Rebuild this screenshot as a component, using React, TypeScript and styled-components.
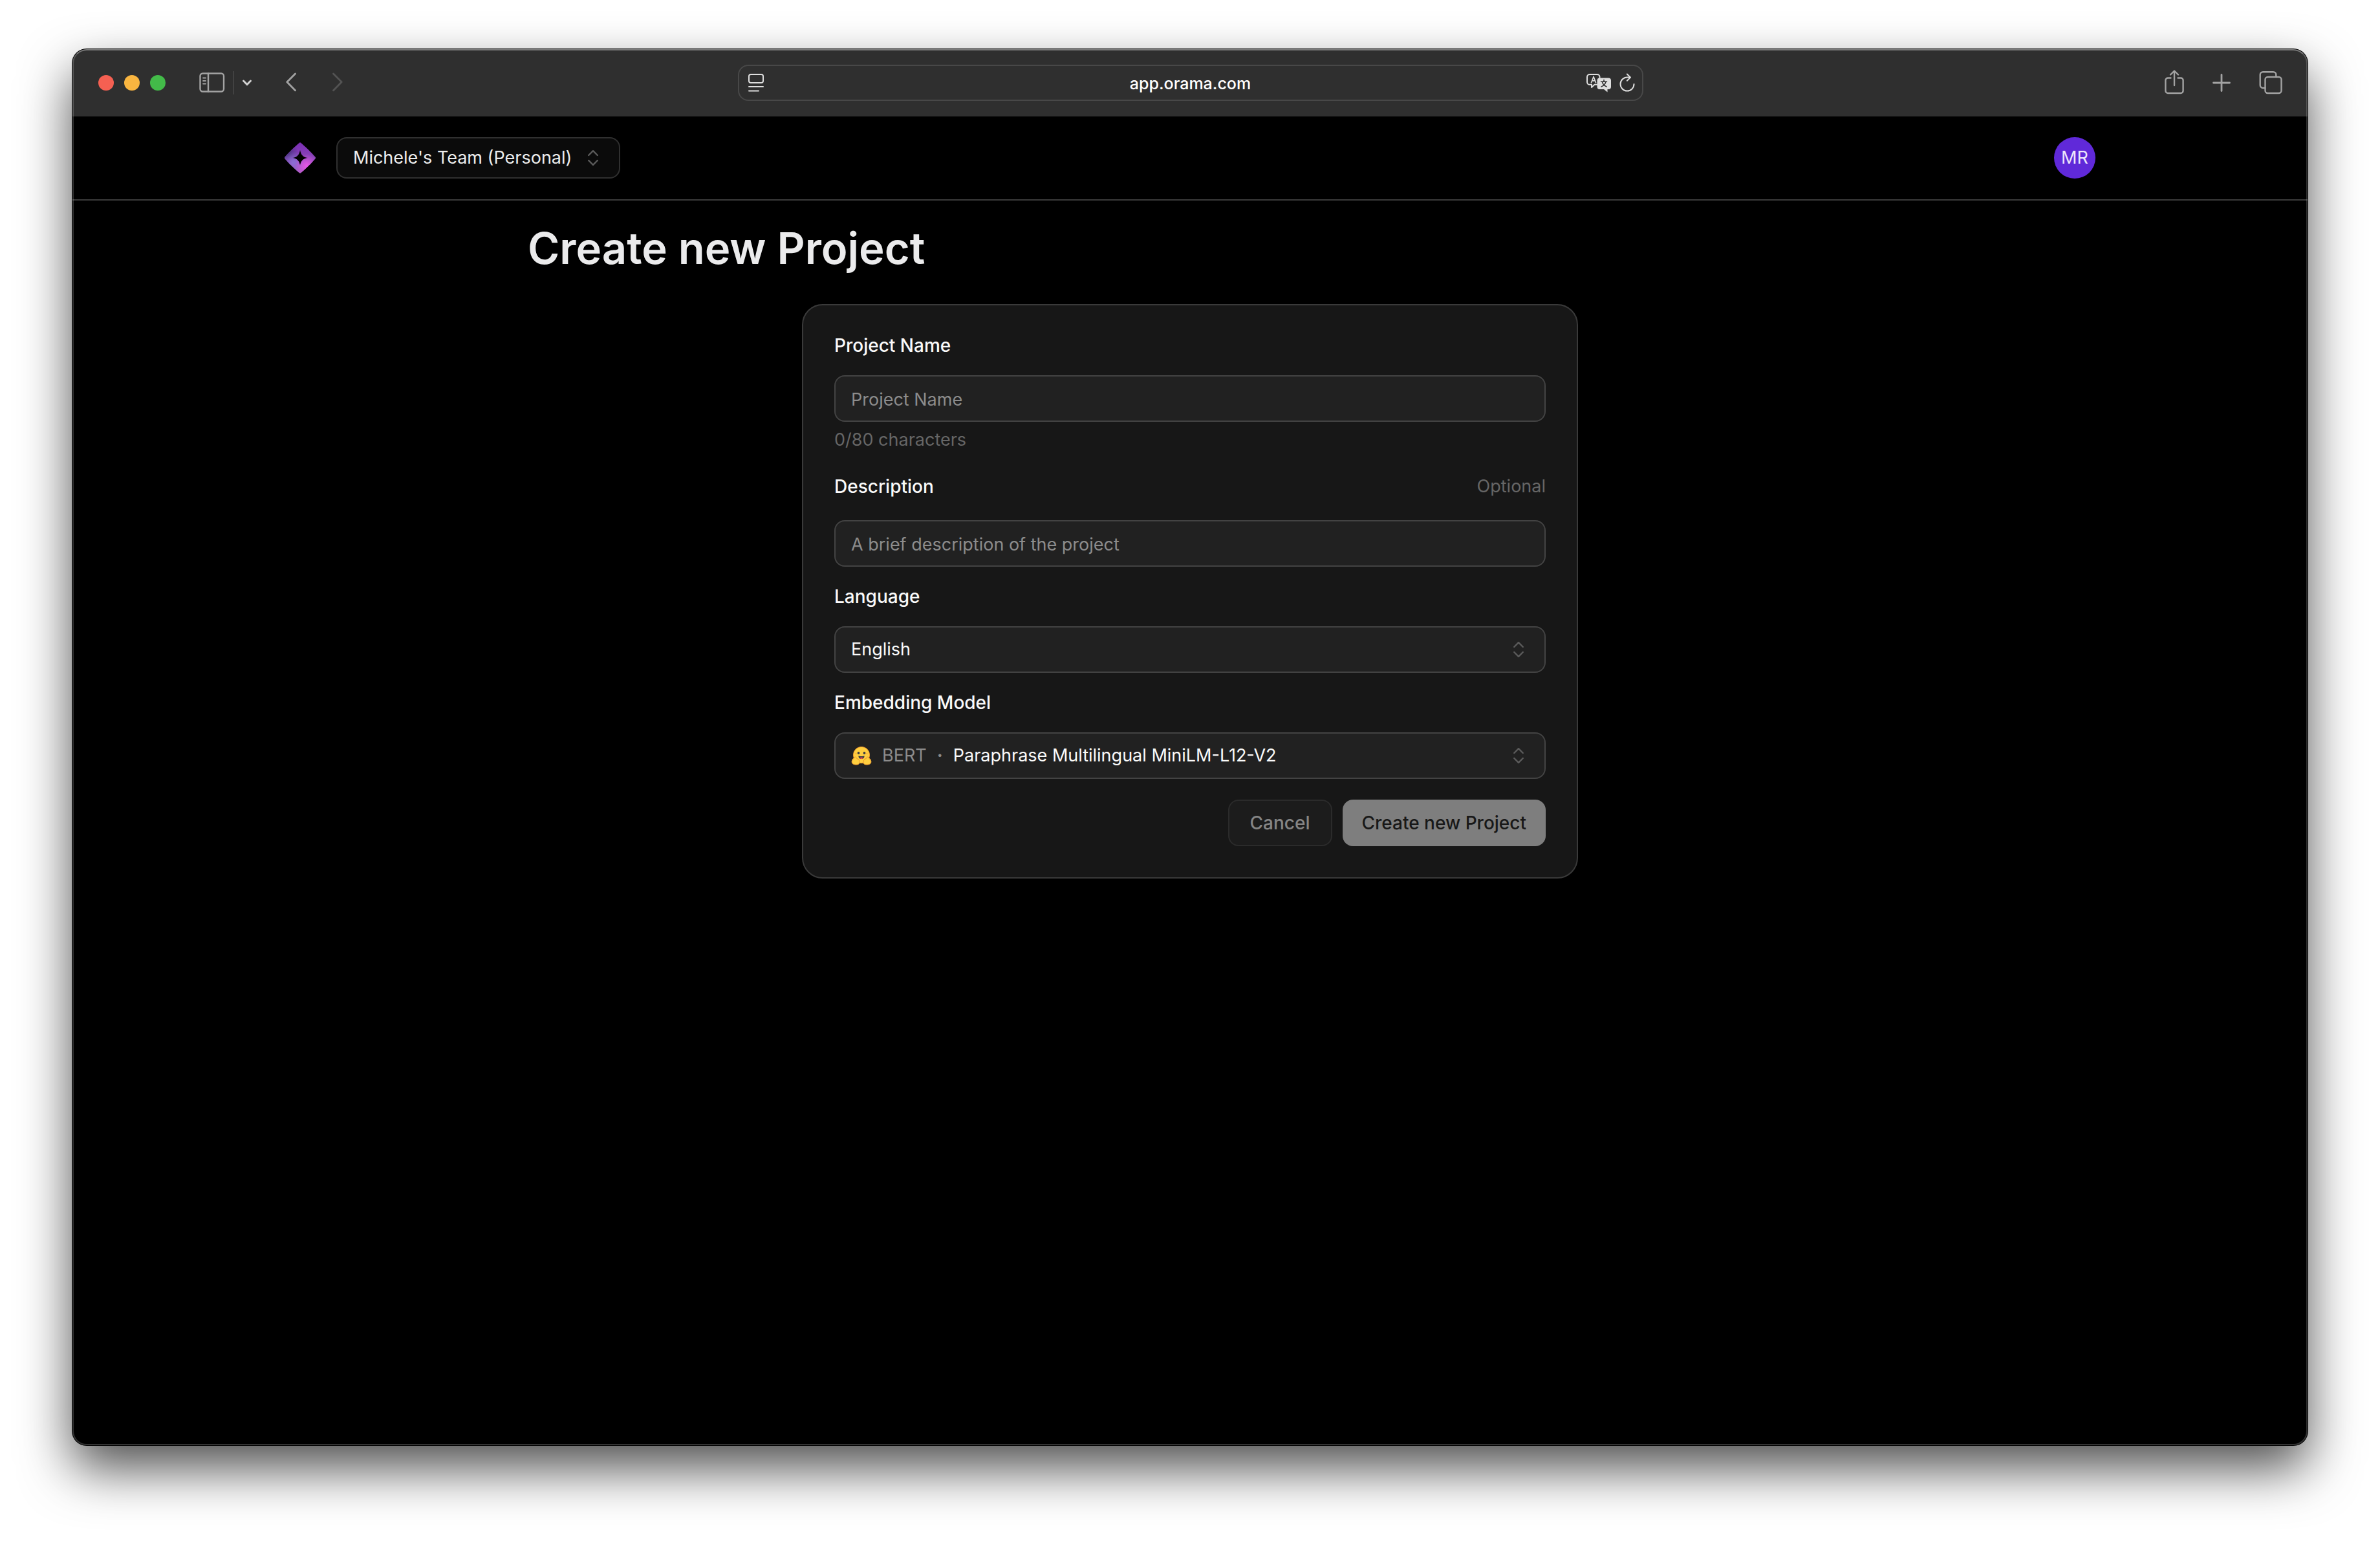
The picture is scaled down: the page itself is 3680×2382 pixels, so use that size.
import React, { useState } from "react";
import styled, { createGlobalStyle } from "styled-components";

const GlobalStyle = createGlobalStyle`
  *, *::before, *::after { box-sizing: border-box; }
  body {
    margin: 0;
    background: #ffffff;
    font-family: Inter, "Liberation Sans", sans-serif;
    font-size: 27px;
    line-height: 40px;
    color: #ededed;
  }
  button, input, select { font: inherit; color: inherit; }
  svg { display: block; flex: none; }
`;

const Desktop = styled.div`
  min-height: 100vh;
  display: flex;
  padding: 76px 112px 148px;
  overflow: hidden;
`;

const BrowserWindow = styled.div`
  position: relative;
  flex: 1;
  min-width: 0;
  display: flex;
  flex-direction: column;
  border-radius: 22px;
  background: #000000;
  box-shadow: 0 0 0 1px #000000, 0 36px 80px rgba(0, 0, 0, 0.69);
  &::after {
    content: "";
    position: absolute;
    inset: 0;
    border: 2px solid rgba(255, 255, 255, 0.2);
    border-top-color: rgba(255, 255, 255, 0.36);
    border-radius: 22px;
    pointer-events: none;
  }
`;

const Toolbar = styled.div`
  display: grid;
  grid-template-columns: 1fr minmax(0, 1400px) 1fr;
  align-items: center;
  height: 104px;
  padding: 0 39px 0 40px;
  background: #2f2f2f;
  border-radius: 22px 22px 0 0;
`;

const ToolGroup = styled.div<{ $end?: boolean; $gap: number }>`
  display: flex;
  align-items: center;
  justify-content: ${(p) => (p.$end ? "flex-end" : "flex-start")};
  gap: ${(p) => p.$gap}px;
`;

const TrafficLights = styled.div`
  display: flex;
  gap: 16px;
  margin-right: 52px;
`;

const Light = styled.button<{ $color: string }>`
  width: 24px;
  height: 24px;
  padding: 0;
  border: 0;
  border-radius: 50%;
  background: ${(p) => p.$color};
`;

const ToolButton = styled.button<{ $tone?: string }>`
  display: flex;
  padding: 0;
  border: 0;
  background: none;
  color: ${(p) => p.$tone ?? "#a3a3a3"};
`;

const ToolDivider = styled.span`
  width: 2px;
  height: 36px;
  margin: 0 12px;
  background: #424242;
`;

const HistoryButtons = styled.div`
  display: flex;
  gap: 56px;
  margin-left: 52px;
`;

const AddressBar = styled.div`
  display: flex;
  align-items: center;
  gap: 12px;
  height: 56px;
  padding: 0 10px 0 14px;
  border: 2px solid #484848;
  border-radius: 16px;
`;

const AddressInput = styled.input`
  flex: 1;
  min-width: 0;
  padding: 2px 0 0 48px;
  border: 0;
  outline: 0;
  background: none;
  color: #ffffff;
  font-size: 25px;
  line-height: 32px;
  font-weight: 500;
  text-align: center;
`;

const SiteHeader = styled.header`
  display: flex;
  align-items: center;
  height: 130px;
  border-bottom: 2px solid #3b3b3b;
`;

const HeaderInner = styled.div`
  display: flex;
  align-items: center;
  gap: 32px;
  width: 100%;
  max-width: 2800px;
  margin: 0 auto;
`;

const LogoLink = styled.a`
  display: flex;
`;

const SelectBox = styled.div<{ $compact?: boolean }>`
  display: flex;
  align-items: center;
  gap: 16px;
  height: ${(p) => (p.$compact ? 64 : 72)}px;
  padding: 0 24px;
  border: 2px solid ${(p) => (p.$compact ? "#303030" : "#434343")};
  border-radius: 16px;
  background: ${(p) => (p.$compact ? "#0b0b0b" : "#212121")};
`;

const Select = styled.select<{ $grow?: boolean }>`
  flex: ${(p) => (p.$grow ? 1 : "none")};
  min-width: 0;
  height: 40px;
  padding: 0;
  border: 0;
  outline: 0;
  appearance: none;
  background: none;
  color: ${(p) => (p.$grow ? "#fafafa" : "#ededed")};
  option { background: #212121; }
`;

const Avatar = styled.button`
  width: 64px;
  height: 64px;
  margin-left: auto;
  padding: 0;
  border: 0;
  border-radius: 50%;
  background: #6029d9;
  color: #ece5fb;
  text-align: center;
`;

const Main = styled.main`
  width: 100%;
  max-width: 2048px;
  margin: 0 auto;
  padding: 34px 0 96px;
`;

const Title = styled.h1`
  margin: 0 0 46px;
  font-size: 67px;
  line-height: 80px;
  font-weight: 600;
  color: #ebebec;
`;

const Card = styled.form`
  display: flex;
  flex-direction: column;
  gap: 32px;
  max-width: 1200px;
  margin: 0 auto;
  padding: 48px;
  border: 2px solid #3a3a3a;
  border-radius: 32px;
  background: #171717;
`;

const Field = styled.div`
  display: flex;
  flex-direction: column;
  gap: 32px;
`;

const LabelRow = styled.div`
  display: flex;
  align-items: center;
  justify-content: space-between;
`;

const Label = styled.label`
  font-size: 28px;
  line-height: 28px;
  font-weight: 500;
  color: #fafafa;
`;

const Hint = styled.span`
  color: #666666;
`;

const ControlStack = styled.div`
  display: flex;
  flex-direction: column;
  gap: 8px;
`;

const TextInput = styled.input`
  width: 100%;
  height: 72px;
  padding: 2px 24px 0;
  border: 2px solid #434343;
  border-radius: 16px;
  outline: 0;
  background: #212121;
  color: #fafafa;
  &::placeholder { color: #8c8c8c; opacity: 1; }
`;

const Vendor = styled.span`
  display: flex;
  align-items: center;
  gap: 16px;
  color: #8c8c8c;
`;

const Dot = styled.span`
  font-weight: 700;
`;

const Actions = styled.div`
  display: flex;
  justify-content: flex-end;
  gap: 16px;
`;

const ActionButton = styled.button<{ $primary?: boolean }>`
  height: 72px;
  padding: 0 ${(p) => (p.$primary ? 30 : 32)}px;
  border: ${(p) => (p.$primary ? "0" : "2px solid #2b2b2b")};
  border-radius: 16px;
  background: ${(p) => (p.$primary ? "#7e7e7e" : "#1c1c1c")};
  color: ${(p) => (p.$primary ? "#181818" : "#858585")};
  font-size: 28px;
  font-weight: 500;
`;

const line = {
  fill: "none",
  stroke: "currentColor",
  strokeLinecap: "round" as const,
  strokeLinejoin: "round" as const,
};

const SidebarIcon = () => (
  <svg width="40" height="32" viewBox="0 0 40 32" {...line} strokeWidth="2.4">
    <rect x="1.5" y="1.5" width="36.5" height="28" rx="4" />
    <path d="M14 1.5v28" />
    <path d="M6 8.5h4M6 13h4M6 17.5h4" strokeWidth="1.8" />
  </svg>
);

const CaretIcon = () => (
  <svg width="16" height="12" viewBox="0 0 16 12" {...line} strokeWidth="3">
    <path d="M2.5 3 8 8.6 13.5 3" />
  </svg>
);

const BackIcon = () => (
  <svg width="16" height="32" viewBox="0 0 16 32" {...line} strokeWidth="2.8">
    <path d="M14.5 2 1.8 14.800 14.5 27.800" />
  </svg>
);

const ForwardIcon = () => (
  <svg width="16" height="32" viewBox="0 0 16 32" {...line} strokeWidth="2.8">
    <path d="M1.5 2 14.2 14.800 1.5 27.800" />
  </svg>
);

const ReaderIcon = () => (
  <svg width="24" height="30" viewBox="0 0 24 30" {...line} strokeWidth="2">
    <rect x="1" y="2" width="22" height="13" rx="3" />
    <path d="M1 21h22M1 27.500h15" />
  </svg>
);

const TranslateIcon = () => (
  <svg width="38" height="30" viewBox="0 0 38 30" {...line}>
    <path
      d="M16 17.800h-3.500L8 22v-4.200H5A4 4 0 0 1 1 14V6a4 4 0 0 1 4-4h11.500a4 4 0 0 1 4 4v1"
      strokeWidth="2"
    />
    <path d="M7.500 14.800 11 5.500l3.500 9.300M8.800 11.800h4.500" strokeWidth="1.700" />
    <path
      d="M20.500 7.500H34a4 4 0 0 1 4 4V21a4 4 0 0 1-4 4h-1.500v4.500L27 25h-6.500a4 4 0 0 1-4-4v-9.500a4 4 0 0 1 4-4Z"
      fill="currentColor"
      stroke="none"
    />
    <path
      d="M27 10.500v2.500M22.500 13.300h9M30 13.500c-1 3.500-3.500 6-7 7.500M24.300 13.500c1 3.500 3.300 6 6.800 7.500"
      stroke="#2f2f2f"
      strokeWidth="1.600"
    />
  </svg>
);

const ReloadIcon = () => (
  <svg width="26" height="30" viewBox="0 0 26 30" {...line} strokeWidth="2">
    <path d="M23.500 17a10.500 10.500 0 1 1-10.500-10.500h4.500" />
    <path d="M12.800 1.500 18 6.600 12.800 11.800" />
  </svg>
);

const ShareIcon = () => (
  <svg width="30" height="40" viewBox="0 0 30 40" {...line} strokeWidth="2.4">
    <path d="M9.500 12.500H5a3.600 3.600 0 0 0-3.600 3.600V32.500A3.600 3.600 0 0 0 5 36h20a3.600 3.600 0 0 0 3.600-3.500V16.100A3.600 3.600 0 0 0 25 12.500h-4.500" />
    <path d="M15 24V2M9 7.500 15 1.500l6 6" />
  </svg>
);

const PlusIcon = () => (
  <svg width="28" height="28" viewBox="0 0 28 28" {...line} strokeWidth="2.8">
    <path d="M14 1.500v25M1.500 14h25" />
  </svg>
);

const TabsIcon = () => (
  <svg width="36" height="36" viewBox="0 0 36 36" {...line} strokeWidth="2.4">
    <rect x="9.500" y="9" width="25" height="25" rx="4" />
    <path d="M9.500 26H6A4.300 4.300 0 0 1 1.700 21.700V5.500A4.300 4.300 0 0 1 6 1.200h16A4.300 4.300 0 0 1 26.300 5.500v3.500" />
  </svg>
);

const LogoIcon = () => (
  <svg width="48" height="48" viewBox="0 0 48 48">
    <defs>
      <linearGradient id="base" x1="24" y1="0" x2="24" y2="48" gradientUnits="userSpaceOnUse">
        <stop offset="0" stopColor="#7a2db5" />
        <stop offset="0.5" stopColor="#8a45b8" />
        <stop offset="1" stopColor="#a85fc0" />
      </linearGradient>
      <radialGradient id="pink" cx="34" cy="36" r="18" gradientUnits="userSpaceOnUse">
        <stop offset="0" stopColor="#e657e8" />
        <stop offset="1" stopColor="#e657e8" stopOpacity="0" />
      </radialGradient>
      <radialGradient id="blue" cx="14" cy="31" r="17" gradientUnits="userSpaceOnUse">
        <stop offset="0" stopColor="#8c6fd6" />
        <stop offset="1" stopColor="#8c6fd6" stopOpacity="0" />
      </radialGradient>
      <radialGradient id="shade" cx="5" cy="17" r="17" gradientUnits="userSpaceOnUse">
        <stop offset="0" stopColor="#45307a" />
        <stop offset="1" stopColor="#45307a" stopOpacity="0" />
      </radialGradient>
    </defs>
    {["base", "shade", "blue", "pink"].map((id) => (
      <path
        key={id}
        fill={`url(#${id})`}
        fillRule="evenodd"
        d="M22.500.9a2.200 2.200 0 0 1 3 0C32 6.500 41 15 47.400 22.500a2.200 2.200 0 0 1 0 3C41 33 32 41.500 25.500 47.100a2.200 2.200 0 0 1-3 0C16 41.500 7 33 .6 25.500a2.200 2.200 0 0 1 0-3C7 15 16 6.500 22.500.9ZM24 12c-1.200 7.500-4.500 10.800-12 12 7.500 1.200 10.800 4.500 12 12 1.200-7.500 4.500-10.800 12-12-7.500-1.200-10.800-4.500-12-12Z"
      />
    ))}
  </svg>
);

const UpDownIcon = () => (
  <svg width="32" height="32" viewBox="0 0 32 32" {...line} stroke="#5c5c5c" strokeWidth="2.400">
    <path d="M9.200 12 16 5.200l6.800 6.800M9.200 20l6.800 6.800 6.800-6.800" />
  </svg>
);

const HuggingFaceIcon = () => (
  <svg width="32" height="30" viewBox="0 0 32 30">
    <path d="M16 1.500C9 1.500 3.500 7 3.500 14c0 7 5.500 12.500 12.500 12.500S28.500 21 28.500 14C28.500 7 23 1.500 16 1.500Z" fill="#ffcf3f" stroke="#f0992e" strokeWidth="1" />
    <circle cx="11.500" cy="11" r="1.900" fill="#3a3b45" />
    <circle cx="20.500" cy="11" r="1.900" fill="#3a3b45" />
    <circle cx="7.500" cy="12" r="1.100" fill="#f7a13a" />
    <circle cx="24.500" cy="12" r="1.100" fill="#f7a13a" />
    <path d="M11.500 15.200c1.500 1 7.500 1 9 0 .3 3.500-2 4.800-4.500 4.800s-4.800-1.300-4.500-4.800Z" fill="#3a3b45" />
    <path d="M13.500 18.800c1-1.300 4-1.300 5 0-.8 1-1.600 1.200-2.500 1.200s-1.800-.2-2.500-1.200Z" fill="#ef4e4e" />
    <path
      d="M6.500 17c1.800 0 1.800 2.300 2.600 3 .9-.8 2.300.2 1.700 1.500 1.500-.2 2.300 1.200 1.500 2.400 1.800 2.300.2 5.100-4.300 5.100C3 29 .8 27 1.300 24.500c-.8-1.200 0-2 .6-2.300-.5-1.200.3-2 1.400-1.900 0-1.200.8-1.700 1.700-1.300.2-1.400.8-2 1.500-2ZM25.500 17c-1.800 0-1.800 2.300-2.600 3-.9-.8-2.300.2-1.700 1.500-1.500-.2-2.300 1.200-1.500 2.400-1.800 2.300-.2 5.100 4.300 5.100 5 0 7.200-2 6.700-4.500.8-1.200 0-2-.6-2.300.5-1.200-.3-2-1.400-1.900 0-1.200-.8-1.700-1.700-1.300-.2-1.400-.8-2-1.500-2Z"
      fill="#ffcf3f"
      stroke="#f0992e"
      strokeWidth="1"
    />
  </svg>
);

export default function App() {
  const [name, setName] = useState("");
  const [description, setDescription] = useState("");
  return (
    <>
      <GlobalStyle />
      <Desktop>
        <BrowserWindow>
          <Toolbar>
            <ToolGroup $gap={0}>
              <TrafficLights>
                <Light $color="#f56052" aria-label="Close" />
                <Light $color="#f9b540" aria-label="Minimize" />
                <Light $color="#43bb49" aria-label="Zoom" />
              </TrafficLights>
              <ToolButton aria-label="Sidebar"><SidebarIcon /></ToolButton>
              <ToolDivider />
              <ToolButton $tone="#cfcfcf" aria-label="Tab groups"><CaretIcon /></ToolButton>
              <HistoryButtons>
                <ToolButton aria-label="Back"><BackIcon /></ToolButton>
                <ToolButton $tone="#535353" aria-label="Forward"><ForwardIcon /></ToolButton>
              </HistoryButtons>
            </ToolGroup>
            <AddressBar>
              <ToolButton $tone="#dedede" aria-label="Reader"><ReaderIcon /></ToolButton>
              <AddressInput aria-label="Address" defaultValue="app.orama.com" />
              <ToolButton $tone="#dedede" aria-label="Translate"><TranslateIcon /></ToolButton>
              <ToolButton $tone="#dedede" aria-label="Reload"><ReloadIcon /></ToolButton>
            </AddressBar>
            <ToolGroup $end $gap={44}>
              <ToolButton aria-label="Share"><ShareIcon /></ToolButton>
              <ToolButton aria-label="New tab"><PlusIcon /></ToolButton>
              <ToolButton aria-label="Tab overview"><TabsIcon /></ToolButton>
            </ToolGroup>
          </Toolbar>

          <SiteHeader>
            <HeaderInner>
              <LogoLink href="#" aria-label="Orama"><LogoIcon /></LogoLink>
              <SelectBox $compact>
                <Select aria-label="Team">
                  <option>Michele's Team (Personal)</option>
                </Select>
                <UpDownIcon />
              </SelectBox>
              <Avatar>MR</Avatar>
            </HeaderInner>
          </SiteHeader>

          <Main>
            <Title>Create new Project</Title>
            <Card onSubmit={(e) => e.preventDefault()}>
              <Field>
                <Label htmlFor="name">Project Name</Label>
                <ControlStack>
                  <TextInput
                    id="name"
                    placeholder="Project Name"
                    maxLength={80}
                    value={name}
                    onChange={(e) => setName(e.target.value)}
                  />
                  <Hint>{`${name.length}/80 characters`}</Hint>
                </ControlStack>
              </Field>
              <Field>
                <LabelRow>
                  <Label htmlFor="description">Description</Label>
                  <Hint>Optional</Hint>
                </LabelRow>
                <TextInput
                  id="description"
                  placeholder="A brief description of the project"
                  value={description}
                  onChange={(e) => setDescription(e.target.value)}
                />
              </Field>
              <Field>
                <Label htmlFor="language">Language</Label>
                <SelectBox>
                  <Select $grow id="language">
                    <option>English</option>
                  </Select>
                  <UpDownIcon />
                </SelectBox>
              </Field>
              <Field>
                <Label htmlFor="model">Embedding Model</Label>
                <SelectBox>
                  <Vendor>
                    <HuggingFaceIcon />
                    <span>BERT</span>
                    <Dot>·</Dot>
                  </Vendor>
                  <Select $grow id="model">
                    <option>Paraphrase Multilingual MiniLM-L12-V2</option>
                  </Select>
                  <UpDownIcon />
                </SelectBox>
              </Field>
              <Actions>
                <ActionButton type="button" disabled>Cancel</ActionButton>
                <ActionButton $primary type="submit" disabled>Create new Project</ActionButton>
              </Actions>
            </Card>
          </Main>
        </BrowserWindow>
      </Desktop>
    </>
  );
}
